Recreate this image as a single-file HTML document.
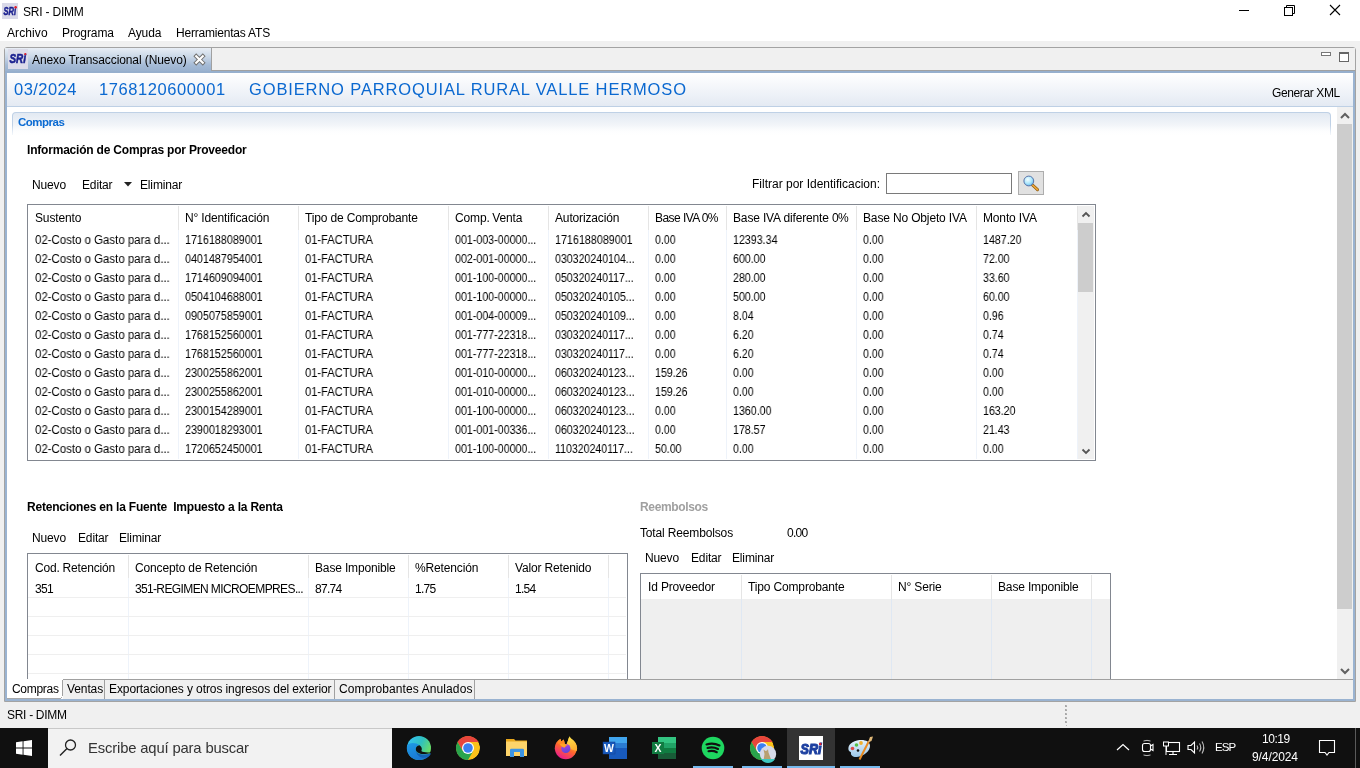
<!DOCTYPE html>
<html><head><meta charset="utf-8"><style>
html,body{margin:0;padding:0;}
body{width:1360px;height:768px;overflow:hidden;position:relative;background:#f0f0f0;font-family:"Liberation Sans",sans-serif;color:#000;}
.t{position:absolute;white-space:pre;will-change:transform;}
.r{position:absolute;box-sizing:border-box;}
svg{position:absolute;overflow:visible;will-change:transform;}
</style></head><body>
<div class="r" style="left:0px;top:0px;width:1360px;height:41px;background:#fff"></div>
<svg style="left:2px;top:3px" width="16" height="16" viewBox="0 0 16 16"><rect x="0" y="0" width="16" height="16" fill="#d9d9e8"/><text x="1.5" y="11.6" font-family="Liberation Sans" font-weight="700" font-style="italic" font-size="10.5" fill="#1c2290" stroke="#1c2290" stroke-width="0.5" textLength="12.5" lengthAdjust="spacingAndGlyphs">SRi</text><circle cx="13.6" cy="4.2" r="1.2" fill="#e8202a"/></svg>
<div class="t" style="left:23px;top:5.84px;font-size:12px;line-height:12px;letter-spacing:-0.2px;">SRI - DIMM</div>
<div class="t" style="left:7px;top:26.84px;font-size:12px;line-height:12px;letter-spacing:0.1px;">Archivo</div>
<div class="t" style="left:62px;top:26.84px;font-size:12px;line-height:12px;letter-spacing:-0.1px;">Programa</div>
<div class="t" style="left:128px;top:26.84px;font-size:12px;line-height:12px;letter-spacing:-0.1px;">Ayuda</div>
<div class="t" style="left:176px;top:26.84px;font-size:12px;line-height:12px;letter-spacing:-0.2px;">Herramientas ATS</div>
<svg style="left:1230px;top:0px" width="130" height="22" viewBox="0 0 130 22"><line x1="9" y1="10.5" x2="19" y2="10.5" stroke="#000" stroke-width="1"/><rect x="54.5" y="7.5" width="8" height="8" fill="none" stroke="#000"/><path d="M56.5 7.5 V5.5 H64.5 V13.5 H62.5" fill="none" stroke="#000"/><path d="M100 5 L110 15 M110 5 L100 15" stroke="#000" stroke-width="1.1"/></svg>
<div class="r" style="left:4px;top:47px;width:1352px;height:655px;border:1px solid #a3a3a3;border-radius:3px 3px 0 0;background:#f0f0f0"></div>
<div class="r" style="left:5px;top:48px;width:206px;height:25px;background:linear-gradient(#e8eef5 0px,#c9d7e7 9px,#a5bbd6 17px,#96afcd 25px)"></div>
<div class="r" style="left:211px;top:48px;width:1144px;height:23px;border-left:1px solid #a0a0a0;border-bottom:1px solid #a0a0a0;background:#f0f0f0"></div>
<div class="r" style="left:5px;top:71px;width:1350px;height:2px;background:#96afcd"></div>
<div class="r" style="left:5px;top:73px;width:2px;height:628px;background:#9ab3d1"></div>
<div class="r" style="left:1353px;top:73px;width:2px;height:628px;background:#9ab3d1"></div>
<div class="r" style="left:5px;top:699px;width:1350px;height:2px;background:#9ab3d1"></div>
<div class="r" style="left:7px;top:73px;width:1346px;height:626px;background:#fff"></div>
<svg style="left:8px;top:49px" width="20" height="20" viewBox="0 0 20 20"><rect x="0" y="0" width="20" height="20" fill="#dcdce9"/><text x="1.5" y="14.299999999999997" font-family="Liberation Sans" font-weight="700" font-style="italic" font-size="13" fill="#1c2290" stroke="#1c2290" stroke-width="0.6" textLength="16.5" lengthAdjust="spacingAndGlyphs">SRi</text><circle cx="17.3" cy="5" r="1.1" fill="#e8202a"/></svg>
<div class="t" style="left:32px;top:53.84px;font-size:12px;line-height:12px;letter-spacing:-0.1px;">Anexo Transaccional (Nuevo)</div>
<svg style="left:193px;top:53px" width="12" height="12" viewBox="0 0 12 12"><path d="M3.2 3.2 L9.8 9.8 M9.8 3.2 L3.2 9.8" stroke="#707070" stroke-width="4" stroke-linecap="square"/><path d="M3.2 3.2 L9.8 9.8 M9.8 3.2 L3.2 9.8" stroke="#fff" stroke-width="2.1" stroke-linecap="square"/></svg>
<div class="r" style="left:1321px;top:52px;width:10px;height:4px;border:1px solid #777;background:#fff"></div>
<div class="r" style="left:1339px;top:52px;width:10px;height:10px;border:1px solid #666;border-top:2px solid #666;background:#fff"></div>
<div class="r" style="left:7px;top:73px;width:1346px;height:33px;background:linear-gradient(#ffffff,#e4eaf3)"></div>
<div class="r" style="left:7px;top:106px;width:1346px;height:1px;background:#bed0e5"></div>
<div class="t" style="left:14px;top:81.03px;font-size:16.5px;line-height:16.5px;letter-spacing:0.45px;color:#0a68d0;"><span style="letter-spacing:0.45px">03</span>/<span style="letter-spacing:0.45px">2024</span></div>
<div class="t" style="left:99px;top:81.03px;font-size:16.5px;line-height:16.5px;letter-spacing:0.58px;color:#0a68d0;"><span style="letter-spacing:0.58px">1768120600001</span></div>
<div class="t" style="left:249px;top:81.03px;font-size:16.5px;line-height:16.5px;letter-spacing:0.86px;color:#0a68d0;">GOBIERNO PARROQUIAL RURAL VALLE HERMOSO</div>
<div class="t" style="left:1272px;top:86.84px;font-size:12px;line-height:12px;letter-spacing:-0.38px;">Generar XML</div>
<div class="r" style="left:12px;top:112px;width:1319px;height:23px;border:1px solid #bfd1e6;border-bottom:none;border-radius:4px 4px 0 0;background:linear-gradient(#e2e9f2,#ffffff)"></div>
<div class="r" style="left:12px;top:125px;width:1319px;height:12px;background:linear-gradient(rgba(255,255,255,0),#fff)"></div>
<div class="t" style="left:18px;top:117.27px;font-size:11.5px;line-height:11.5px;letter-spacing:-0.5px;font-weight:700;color:#0a6ad2;">Compras</div>
<div class="r" style="left:1337px;top:107px;width:16px;height:572px;background:#f0f0f0"></div>
<div class="r" style="left:1337px;top:124px;width:15px;height:485px;background:#cdcdcd"></div>
<svg style="left:1337px;top:107px" width="16" height="16" viewBox="0 0 16 16"><path d="M4 11 L8 7 L12 11" fill="none" stroke="#606060" stroke-width="2"/></svg>
<svg style="left:1337px;top:663px" width="16" height="16" viewBox="0 0 16 16"><path d="M4 6 L8 10 L12 6" fill="none" stroke="#606060" stroke-width="2"/></svg>
<div class="t" style="left:27px;top:143.84px;font-size:12px;line-height:12px;letter-spacing:-0.2px;font-weight:700;">Información de Compras por Proveedor</div>
<div class="t" style="left:32px;top:178.84px;font-size:12px;line-height:12px;letter-spacing:-0.15px;">Nuevo</div>
<div class="t" style="left:82px;top:178.84px;font-size:12px;line-height:12px;letter-spacing:-0.15px;">Editar</div>
<svg style="left:123px;top:181px" width="10" height="7" viewBox="0 0 10 7"><path d="M1 1 L9 1 L5 5.5 Z" fill="#222"/></svg>
<div class="t" style="left:140px;top:178.84px;font-size:12px;line-height:12px;letter-spacing:-0.15px;">Eliminar</div>
<div class="t" style="left:752px;top:177.84px;font-size:12px;line-height:12px;letter-spacing:0px;">Filtrar por Identificacion:</div>
<div class="r" style="left:886px;top:173px;width:126px;height:21px;border:1px solid #7a7a7a;background:#fff"></div>
<div class="r" style="left:1018px;top:171px;width:26px;height:24px;border:1px solid #adadad;background:#e1e1e1"></div>
<svg style="left:1018px;top:171px" width="26" height="24" viewBox="0 0 26 24"><defs><radialGradient id="lg" cx="0.4" cy="0.35" r="0.7"><stop offset="0" stop-color="#f4feff"/><stop offset="0.55" stop-color="#b0e8fc"/><stop offset="1" stop-color="#60b8ec"/></radialGradient></defs><line x1="14.5" y1="14" x2="19.5" y2="18.7" stroke="#8a5a10" stroke-width="3" stroke-linecap="round"/><line x1="14.5" y1="14" x2="19.5" y2="18.7" stroke="#f0a838" stroke-width="1.6" stroke-linecap="round"/><circle cx="10.8" cy="10" r="4.9" fill="url(#lg)" stroke="#5068a0" stroke-width="0.9"/></svg>
<div class="r" style="left:27px;top:204px;width:1069px;height:257px;border:1px solid #828790;background:#fff"></div>
<div class="r" style="left:178px;top:206px;width:1px;height:24px;background:#e5e5e5"></div>
<div class="r" style="left:178px;top:230px;width:1px;height:229px;background:#eef3fa"></div>
<div class="r" style="left:298px;top:206px;width:1px;height:24px;background:#e5e5e5"></div>
<div class="r" style="left:298px;top:230px;width:1px;height:229px;background:#eef3fa"></div>
<div class="r" style="left:448px;top:206px;width:1px;height:24px;background:#e5e5e5"></div>
<div class="r" style="left:448px;top:230px;width:1px;height:229px;background:#eef3fa"></div>
<div class="r" style="left:548px;top:206px;width:1px;height:24px;background:#e5e5e5"></div>
<div class="r" style="left:548px;top:230px;width:1px;height:229px;background:#eef3fa"></div>
<div class="r" style="left:648px;top:206px;width:1px;height:24px;background:#e5e5e5"></div>
<div class="r" style="left:648px;top:230px;width:1px;height:229px;background:#eef3fa"></div>
<div class="r" style="left:726px;top:206px;width:1px;height:24px;background:#e5e5e5"></div>
<div class="r" style="left:726px;top:230px;width:1px;height:229px;background:#eef3fa"></div>
<div class="r" style="left:856px;top:206px;width:1px;height:24px;background:#e5e5e5"></div>
<div class="r" style="left:856px;top:230px;width:1px;height:229px;background:#eef3fa"></div>
<div class="r" style="left:976px;top:206px;width:1px;height:24px;background:#e5e5e5"></div>
<div class="r" style="left:976px;top:230px;width:1px;height:229px;background:#eef3fa"></div>
<div class="r" style="left:1077px;top:206px;width:1px;height:24px;background:#e5e5e5"></div>
<div class="r" style="left:1077px;top:230px;width:1px;height:229px;background:#eef3fa"></div>
<div class="t" style="left:35px;top:211.84px;font-size:12px;line-height:12px;letter-spacing:-0.15px;">Sustento</div>
<div class="t" style="left:185px;top:211.84px;font-size:12px;line-height:12px;letter-spacing:-0.15px;">N° Identificación</div>
<div class="t" style="left:305px;top:211.84px;font-size:12px;line-height:12px;letter-spacing:-0.15px;">Tipo de Comprobante</div>
<div class="t" style="left:455px;top:211.84px;font-size:12px;line-height:12px;letter-spacing:-0.15px;">Comp<span style="letter-spacing:-0.7px">.</span> Venta</div>
<div class="t" style="left:555px;top:211.84px;font-size:12px;line-height:12px;letter-spacing:-0.15px;">Autorización</div>
<div class="t" style="left:655px;top:211.84px;font-size:12px;line-height:12px;letter-spacing:-0.55px;">Base IVA <span style="letter-spacing:-0.7px">0</span>%</div>
<div class="t" style="left:733px;top:211.84px;font-size:12px;line-height:12px;letter-spacing:-0.15px;">Base IVA diferente <span style="letter-spacing:-0.7px">0</span>%</div>
<div class="t" style="left:863px;top:211.84px;font-size:12px;line-height:12px;letter-spacing:-0.15px;">Base No Objeto IVA</div>
<div class="t" style="left:983px;top:211.84px;font-size:12px;line-height:12px;letter-spacing:-0.15px;">Monto IVA</div>
<div class="t" style="left:35px;top:233.84px;font-size:12px;line-height:12px;transform:scaleX(0.9530);transform-origin:0 0;">02-Costo o Gasto para d...</div>
<div class="t" style="left:185px;top:233.84px;font-size:12px;line-height:12px;transform:scaleX(0.8951);transform-origin:0 0;">1716188089001</div>
<div class="t" style="left:305px;top:233.84px;font-size:12px;line-height:12px;transform:scaleX(0.9264);transform-origin:0 0;">01-FACTURA</div>
<div class="t" style="left:455px;top:233.84px;font-size:12px;line-height:12px;transform:scaleX(0.8895);transform-origin:0 0;">001-003-00000...</div>
<div class="t" style="left:555px;top:233.84px;font-size:12px;line-height:12px;transform:scaleX(0.8951);transform-origin:0 0;">1716188089001</div>
<div class="t" style="left:655px;top:233.84px;font-size:12px;line-height:12px;transform:scaleX(0.8801);transform-origin:0 0;">0.00</div>
<div class="t" style="left:733px;top:233.84px;font-size:12px;line-height:12px;transform:scaleX(0.8881);transform-origin:0 0;">12393.34</div>
<div class="t" style="left:863px;top:233.84px;font-size:12px;line-height:12px;transform:scaleX(0.8801);transform-origin:0 0;">0.00</div>
<div class="t" style="left:983px;top:233.84px;font-size:12px;line-height:12px;transform:scaleX(0.8870);transform-origin:0 0;">1487.20</div>
<div class="t" style="left:35px;top:252.84px;font-size:12px;line-height:12px;transform:scaleX(0.9530);transform-origin:0 0;">02-Costo o Gasto para d...</div>
<div class="t" style="left:185px;top:252.84px;font-size:12px;line-height:12px;transform:scaleX(0.8951);transform-origin:0 0;">0401487954001</div>
<div class="t" style="left:305px;top:252.84px;font-size:12px;line-height:12px;transform:scaleX(0.9264);transform-origin:0 0;">01-FACTURA</div>
<div class="t" style="left:455px;top:252.84px;font-size:12px;line-height:12px;transform:scaleX(0.8895);transform-origin:0 0;">002-001-00000...</div>
<div class="t" style="left:555px;top:252.84px;font-size:12px;line-height:12px;transform:scaleX(0.8834);transform-origin:0 0;">030320240104...</div>
<div class="t" style="left:655px;top:252.84px;font-size:12px;line-height:12px;transform:scaleX(0.8801);transform-origin:0 0;">0.00</div>
<div class="t" style="left:733px;top:252.84px;font-size:12px;line-height:12px;transform:scaleX(0.8856);transform-origin:0 0;">600.00</div>
<div class="t" style="left:863px;top:252.84px;font-size:12px;line-height:12px;transform:scaleX(0.8801);transform-origin:0 0;">0.00</div>
<div class="t" style="left:983px;top:252.84px;font-size:12px;line-height:12px;transform:scaleX(0.8834);transform-origin:0 0;">72.00</div>
<div class="t" style="left:35px;top:271.84px;font-size:12px;line-height:12px;transform:scaleX(0.9530);transform-origin:0 0;">02-Costo o Gasto para d...</div>
<div class="t" style="left:185px;top:271.84px;font-size:12px;line-height:12px;transform:scaleX(0.8951);transform-origin:0 0;">1714609094001</div>
<div class="t" style="left:305px;top:271.84px;font-size:12px;line-height:12px;transform:scaleX(0.9264);transform-origin:0 0;">01-FACTURA</div>
<div class="t" style="left:455px;top:271.84px;font-size:12px;line-height:12px;transform:scaleX(0.8895);transform-origin:0 0;">001-100-00000...</div>
<div class="t" style="left:555px;top:271.84px;font-size:12px;line-height:12px;transform:scaleX(0.8823);transform-origin:0 0;">050320240117...</div>
<div class="t" style="left:655px;top:271.84px;font-size:12px;line-height:12px;transform:scaleX(0.8801);transform-origin:0 0;">0.00</div>
<div class="t" style="left:733px;top:271.84px;font-size:12px;line-height:12px;transform:scaleX(0.8856);transform-origin:0 0;">280.00</div>
<div class="t" style="left:863px;top:271.84px;font-size:12px;line-height:12px;transform:scaleX(0.8801);transform-origin:0 0;">0.00</div>
<div class="t" style="left:983px;top:271.84px;font-size:12px;line-height:12px;transform:scaleX(0.8834);transform-origin:0 0;">33.60</div>
<div class="t" style="left:35px;top:290.84px;font-size:12px;line-height:12px;transform:scaleX(0.9530);transform-origin:0 0;">02-Costo o Gasto para d...</div>
<div class="t" style="left:185px;top:290.84px;font-size:12px;line-height:12px;transform:scaleX(0.8951);transform-origin:0 0;">0504104688001</div>
<div class="t" style="left:305px;top:290.84px;font-size:12px;line-height:12px;transform:scaleX(0.9264);transform-origin:0 0;">01-FACTURA</div>
<div class="t" style="left:455px;top:290.84px;font-size:12px;line-height:12px;transform:scaleX(0.8895);transform-origin:0 0;">001-100-00000...</div>
<div class="t" style="left:555px;top:290.84px;font-size:12px;line-height:12px;transform:scaleX(0.8834);transform-origin:0 0;">050320240105...</div>
<div class="t" style="left:655px;top:290.84px;font-size:12px;line-height:12px;transform:scaleX(0.8801);transform-origin:0 0;">0.00</div>
<div class="t" style="left:733px;top:290.84px;font-size:12px;line-height:12px;transform:scaleX(0.8856);transform-origin:0 0;">500.00</div>
<div class="t" style="left:863px;top:290.84px;font-size:12px;line-height:12px;transform:scaleX(0.8801);transform-origin:0 0;">0.00</div>
<div class="t" style="left:983px;top:290.84px;font-size:12px;line-height:12px;transform:scaleX(0.8834);transform-origin:0 0;">60.00</div>
<div class="t" style="left:35px;top:309.84px;font-size:12px;line-height:12px;transform:scaleX(0.9530);transform-origin:0 0;">02-Costo o Gasto para d...</div>
<div class="t" style="left:185px;top:309.84px;font-size:12px;line-height:12px;transform:scaleX(0.8951);transform-origin:0 0;">0905075859001</div>
<div class="t" style="left:305px;top:309.84px;font-size:12px;line-height:12px;transform:scaleX(0.9264);transform-origin:0 0;">01-FACTURA</div>
<div class="t" style="left:455px;top:309.84px;font-size:12px;line-height:12px;transform:scaleX(0.8895);transform-origin:0 0;">001-004-00009...</div>
<div class="t" style="left:555px;top:309.84px;font-size:12px;line-height:12px;transform:scaleX(0.8834);transform-origin:0 0;">050320240109...</div>
<div class="t" style="left:655px;top:309.84px;font-size:12px;line-height:12px;transform:scaleX(0.8801);transform-origin:0 0;">0.00</div>
<div class="t" style="left:733px;top:309.84px;font-size:12px;line-height:12px;transform:scaleX(0.8801);transform-origin:0 0;">8.04</div>
<div class="t" style="left:863px;top:309.84px;font-size:12px;line-height:12px;transform:scaleX(0.8801);transform-origin:0 0;">0.00</div>
<div class="t" style="left:983px;top:309.84px;font-size:12px;line-height:12px;transform:scaleX(0.8801);transform-origin:0 0;">0.96</div>
<div class="t" style="left:35px;top:328.84px;font-size:12px;line-height:12px;transform:scaleX(0.9530);transform-origin:0 0;">02-Costo o Gasto para d...</div>
<div class="t" style="left:185px;top:328.84px;font-size:12px;line-height:12px;transform:scaleX(0.8951);transform-origin:0 0;">1768152560001</div>
<div class="t" style="left:305px;top:328.84px;font-size:12px;line-height:12px;transform:scaleX(0.9264);transform-origin:0 0;">01-FACTURA</div>
<div class="t" style="left:455px;top:328.84px;font-size:12px;line-height:12px;transform:scaleX(0.8895);transform-origin:0 0;">001-777-22318...</div>
<div class="t" style="left:555px;top:328.84px;font-size:12px;line-height:12px;transform:scaleX(0.8823);transform-origin:0 0;">030320240117...</div>
<div class="t" style="left:655px;top:328.84px;font-size:12px;line-height:12px;transform:scaleX(0.8801);transform-origin:0 0;">0.00</div>
<div class="t" style="left:733px;top:328.84px;font-size:12px;line-height:12px;transform:scaleX(0.8801);transform-origin:0 0;">6.20</div>
<div class="t" style="left:863px;top:328.84px;font-size:12px;line-height:12px;transform:scaleX(0.8801);transform-origin:0 0;">0.00</div>
<div class="t" style="left:983px;top:328.84px;font-size:12px;line-height:12px;transform:scaleX(0.8801);transform-origin:0 0;">0.74</div>
<div class="t" style="left:35px;top:347.84px;font-size:12px;line-height:12px;transform:scaleX(0.9530);transform-origin:0 0;">02-Costo o Gasto para d...</div>
<div class="t" style="left:185px;top:347.84px;font-size:12px;line-height:12px;transform:scaleX(0.8951);transform-origin:0 0;">1768152560001</div>
<div class="t" style="left:305px;top:347.84px;font-size:12px;line-height:12px;transform:scaleX(0.9264);transform-origin:0 0;">01-FACTURA</div>
<div class="t" style="left:455px;top:347.84px;font-size:12px;line-height:12px;transform:scaleX(0.8895);transform-origin:0 0;">001-777-22318...</div>
<div class="t" style="left:555px;top:347.84px;font-size:12px;line-height:12px;transform:scaleX(0.8823);transform-origin:0 0;">030320240117...</div>
<div class="t" style="left:655px;top:347.84px;font-size:12px;line-height:12px;transform:scaleX(0.8801);transform-origin:0 0;">0.00</div>
<div class="t" style="left:733px;top:347.84px;font-size:12px;line-height:12px;transform:scaleX(0.8801);transform-origin:0 0;">6.20</div>
<div class="t" style="left:863px;top:347.84px;font-size:12px;line-height:12px;transform:scaleX(0.8801);transform-origin:0 0;">0.00</div>
<div class="t" style="left:983px;top:347.84px;font-size:12px;line-height:12px;transform:scaleX(0.8801);transform-origin:0 0;">0.74</div>
<div class="t" style="left:35px;top:366.84px;font-size:12px;line-height:12px;transform:scaleX(0.9530);transform-origin:0 0;">02-Costo o Gasto para d...</div>
<div class="t" style="left:185px;top:366.84px;font-size:12px;line-height:12px;transform:scaleX(0.8951);transform-origin:0 0;">2300255862001</div>
<div class="t" style="left:305px;top:366.84px;font-size:12px;line-height:12px;transform:scaleX(0.9264);transform-origin:0 0;">01-FACTURA</div>
<div class="t" style="left:455px;top:366.84px;font-size:12px;line-height:12px;transform:scaleX(0.8895);transform-origin:0 0;">001-010-00000...</div>
<div class="t" style="left:555px;top:366.84px;font-size:12px;line-height:12px;transform:scaleX(0.8834);transform-origin:0 0;">060320240123...</div>
<div class="t" style="left:655px;top:366.84px;font-size:12px;line-height:12px;transform:scaleX(0.8856);transform-origin:0 0;">159.26</div>
<div class="t" style="left:733px;top:366.84px;font-size:12px;line-height:12px;transform:scaleX(0.8801);transform-origin:0 0;">0.00</div>
<div class="t" style="left:863px;top:366.84px;font-size:12px;line-height:12px;transform:scaleX(0.8801);transform-origin:0 0;">0.00</div>
<div class="t" style="left:983px;top:366.84px;font-size:12px;line-height:12px;transform:scaleX(0.8801);transform-origin:0 0;">0.00</div>
<div class="t" style="left:35px;top:385.84px;font-size:12px;line-height:12px;transform:scaleX(0.9530);transform-origin:0 0;">02-Costo o Gasto para d...</div>
<div class="t" style="left:185px;top:385.84px;font-size:12px;line-height:12px;transform:scaleX(0.8951);transform-origin:0 0;">2300255862001</div>
<div class="t" style="left:305px;top:385.84px;font-size:12px;line-height:12px;transform:scaleX(0.9264);transform-origin:0 0;">01-FACTURA</div>
<div class="t" style="left:455px;top:385.84px;font-size:12px;line-height:12px;transform:scaleX(0.8895);transform-origin:0 0;">001-010-00000...</div>
<div class="t" style="left:555px;top:385.84px;font-size:12px;line-height:12px;transform:scaleX(0.8834);transform-origin:0 0;">060320240123...</div>
<div class="t" style="left:655px;top:385.84px;font-size:12px;line-height:12px;transform:scaleX(0.8856);transform-origin:0 0;">159.26</div>
<div class="t" style="left:733px;top:385.84px;font-size:12px;line-height:12px;transform:scaleX(0.8801);transform-origin:0 0;">0.00</div>
<div class="t" style="left:863px;top:385.84px;font-size:12px;line-height:12px;transform:scaleX(0.8801);transform-origin:0 0;">0.00</div>
<div class="t" style="left:983px;top:385.84px;font-size:12px;line-height:12px;transform:scaleX(0.8801);transform-origin:0 0;">0.00</div>
<div class="t" style="left:35px;top:404.84px;font-size:12px;line-height:12px;transform:scaleX(0.9530);transform-origin:0 0;">02-Costo o Gasto para d...</div>
<div class="t" style="left:185px;top:404.84px;font-size:12px;line-height:12px;transform:scaleX(0.8951);transform-origin:0 0;">2300154289001</div>
<div class="t" style="left:305px;top:404.84px;font-size:12px;line-height:12px;transform:scaleX(0.9264);transform-origin:0 0;">01-FACTURA</div>
<div class="t" style="left:455px;top:404.84px;font-size:12px;line-height:12px;transform:scaleX(0.8895);transform-origin:0 0;">001-100-00000...</div>
<div class="t" style="left:555px;top:404.84px;font-size:12px;line-height:12px;transform:scaleX(0.8834);transform-origin:0 0;">060320240123...</div>
<div class="t" style="left:655px;top:404.84px;font-size:12px;line-height:12px;transform:scaleX(0.8801);transform-origin:0 0;">0.00</div>
<div class="t" style="left:733px;top:404.84px;font-size:12px;line-height:12px;transform:scaleX(0.8870);transform-origin:0 0;">1360.00</div>
<div class="t" style="left:863px;top:404.84px;font-size:12px;line-height:12px;transform:scaleX(0.8801);transform-origin:0 0;">0.00</div>
<div class="t" style="left:983px;top:404.84px;font-size:12px;line-height:12px;transform:scaleX(0.8856);transform-origin:0 0;">163.20</div>
<div class="t" style="left:35px;top:423.84px;font-size:12px;line-height:12px;transform:scaleX(0.9530);transform-origin:0 0;">02-Costo o Gasto para d...</div>
<div class="t" style="left:185px;top:423.84px;font-size:12px;line-height:12px;transform:scaleX(0.8951);transform-origin:0 0;">2390018293001</div>
<div class="t" style="left:305px;top:423.84px;font-size:12px;line-height:12px;transform:scaleX(0.9264);transform-origin:0 0;">01-FACTURA</div>
<div class="t" style="left:455px;top:423.84px;font-size:12px;line-height:12px;transform:scaleX(0.8895);transform-origin:0 0;">001-001-00336...</div>
<div class="t" style="left:555px;top:423.84px;font-size:12px;line-height:12px;transform:scaleX(0.8834);transform-origin:0 0;">060320240123...</div>
<div class="t" style="left:655px;top:423.84px;font-size:12px;line-height:12px;transform:scaleX(0.8801);transform-origin:0 0;">0.00</div>
<div class="t" style="left:733px;top:423.84px;font-size:12px;line-height:12px;transform:scaleX(0.8856);transform-origin:0 0;">178.57</div>
<div class="t" style="left:863px;top:423.84px;font-size:12px;line-height:12px;transform:scaleX(0.8801);transform-origin:0 0;">0.00</div>
<div class="t" style="left:983px;top:423.84px;font-size:12px;line-height:12px;transform:scaleX(0.8834);transform-origin:0 0;">21.43</div>
<div class="t" style="left:35px;top:442.84px;font-size:12px;line-height:12px;transform:scaleX(0.9530);transform-origin:0 0;">02-Costo o Gasto para d...</div>
<div class="t" style="left:185px;top:442.84px;font-size:12px;line-height:12px;transform:scaleX(0.8951);transform-origin:0 0;">1720652450001</div>
<div class="t" style="left:305px;top:442.84px;font-size:12px;line-height:12px;transform:scaleX(0.9264);transform-origin:0 0;">01-FACTURA</div>
<div class="t" style="left:455px;top:442.84px;font-size:12px;line-height:12px;transform:scaleX(0.8895);transform-origin:0 0;">001-100-00000...</div>
<div class="t" style="left:555px;top:442.84px;font-size:12px;line-height:12px;transform:scaleX(0.8811);transform-origin:0 0;">110320240117...</div>
<div class="t" style="left:655px;top:442.84px;font-size:12px;line-height:12px;transform:scaleX(0.8834);transform-origin:0 0;">50.00</div>
<div class="t" style="left:733px;top:442.84px;font-size:12px;line-height:12px;transform:scaleX(0.8801);transform-origin:0 0;">0.00</div>
<div class="t" style="left:863px;top:442.84px;font-size:12px;line-height:12px;transform:scaleX(0.8801);transform-origin:0 0;">0.00</div>
<div class="t" style="left:983px;top:442.84px;font-size:12px;line-height:12px;transform:scaleX(0.8801);transform-origin:0 0;">0.00</div>
<div class="r" style="left:1078px;top:206px;width:16px;height:253px;background:#f0f0f0"></div>
<div class="r" style="left:1078px;top:223px;width:15px;height:69px;background:#cdcdcd"></div>
<svg style="left:1078px;top:206px" width="16" height="16" viewBox="0 0 16 16"><path d="M4.5 10.5 L8 7 L11.5 10.5" fill="none" stroke="#555" stroke-width="1.8"/></svg>
<svg style="left:1078px;top:443px" width="16" height="16" viewBox="0 0 16 16"><path d="M4.5 6.5 L8 10 L11.5 6.5" fill="none" stroke="#555" stroke-width="1.8"/></svg>
<div class="t" style="left:27px;top:500.84px;font-size:12px;line-height:12px;letter-spacing:-0.2px;font-weight:700;">Retenciones en la Fuente  Impuesto a la Renta</div>
<div class="t" style="left:32px;top:531.84px;font-size:12px;line-height:12px;letter-spacing:-0.15px;">Nuevo</div>
<div class="t" style="left:78px;top:531.84px;font-size:12px;line-height:12px;letter-spacing:-0.15px;">Editar</div>
<div class="t" style="left:119px;top:531.84px;font-size:12px;line-height:12px;letter-spacing:-0.15px;">Eliminar</div>
<div class="r" style="left:27px;top:553px;width:601px;height:130px;border:1px solid #828790;border-bottom:none;background:#fff"></div>
<div class="r" style="left:128px;top:555px;width:1px;height:23px;background:#e5e5e5"></div>
<div class="r" style="left:128px;top:578px;width:1px;height:101px;background:#eef3fa"></div>
<div class="r" style="left:308px;top:555px;width:1px;height:23px;background:#e5e5e5"></div>
<div class="r" style="left:308px;top:578px;width:1px;height:101px;background:#eef3fa"></div>
<div class="r" style="left:408px;top:555px;width:1px;height:23px;background:#e5e5e5"></div>
<div class="r" style="left:408px;top:578px;width:1px;height:101px;background:#eef3fa"></div>
<div class="r" style="left:508px;top:555px;width:1px;height:23px;background:#e5e5e5"></div>
<div class="r" style="left:508px;top:578px;width:1px;height:101px;background:#eef3fa"></div>
<div class="r" style="left:608px;top:555px;width:1px;height:23px;background:#e5e5e5"></div>
<div class="r" style="left:608px;top:578px;width:1px;height:101px;background:#eef3fa"></div>
<div class="r" style="left:28px;top:597px;width:598px;height:1px;background:#efefef"></div>
<div class="r" style="left:28px;top:616px;width:598px;height:1px;background:#efefef"></div>
<div class="r" style="left:28px;top:635px;width:598px;height:1px;background:#efefef"></div>
<div class="r" style="left:28px;top:654px;width:598px;height:1px;background:#efefef"></div>
<div class="r" style="left:28px;top:673px;width:598px;height:1px;background:#efefef"></div>
<div class="t" style="left:35px;top:561.84px;font-size:12px;line-height:12px;letter-spacing:-0.15px;">Cod<span style="letter-spacing:-0.7px">.</span> Retención</div>
<div class="t" style="left:135px;top:561.84px;font-size:12px;line-height:12px;letter-spacing:-0.15px;">Concepto de Retención</div>
<div class="t" style="left:315px;top:561.84px;font-size:12px;line-height:12px;letter-spacing:-0.15px;">Base Imponible</div>
<div class="t" style="left:415px;top:561.84px;font-size:12px;line-height:12px;letter-spacing:-0.15px;">%Retención</div>
<div class="t" style="left:515px;top:561.84px;font-size:12px;line-height:12px;letter-spacing:-0.15px;">Valor Retenido</div>
<div class="t" style="left:35px;top:582.84px;font-size:12px;line-height:12px;letter-spacing:-0.15px;"><span style="letter-spacing:-0.7px">351</span></div>
<div class="t" style="left:135px;top:582.84px;font-size:12px;line-height:12px;letter-spacing:-0.6px;"><span style="letter-spacing:-0.7px">351</span>-REGIMEN MICROEMPRES<span style="letter-spacing:-0.7px">...</span></div>
<div class="t" style="left:315px;top:582.84px;font-size:12px;line-height:12px;letter-spacing:-0.15px;"><span style="letter-spacing:-0.7px">87.74</span></div>
<div class="t" style="left:415px;top:582.84px;font-size:12px;line-height:12px;letter-spacing:-0.15px;"><span style="letter-spacing:-0.7px">1.75</span></div>
<div class="t" style="left:515px;top:582.84px;font-size:12px;line-height:12px;letter-spacing:-0.15px;"><span style="letter-spacing:-0.7px">1.54</span></div>
<div class="t" style="left:640px;top:500.84px;font-size:12px;line-height:12px;letter-spacing:-0.35px;font-weight:700;color:#a0a0a0;">Reembolsos</div>
<div class="t" style="left:640px;top:526.84px;font-size:12px;line-height:12px;letter-spacing:-0.15px;">Total Reembolsos</div>
<div class="t" style="left:787px;top:526.84px;font-size:12px;line-height:12px;letter-spacing:-0.15px;"><span style="letter-spacing:-0.7px">0.00</span></div>
<div class="t" style="left:645px;top:551.84px;font-size:12px;line-height:12px;letter-spacing:-0.15px;">Nuevo</div>
<div class="t" style="left:691px;top:551.84px;font-size:12px;line-height:12px;letter-spacing:-0.15px;">Editar</div>
<div class="t" style="left:732px;top:551.84px;font-size:12px;line-height:12px;letter-spacing:-0.15px;">Eliminar</div>
<div class="r" style="left:640px;top:573px;width:471px;height:110px;border:1px solid #828790;border-bottom:none;background:#efefef"></div>
<div class="r" style="left:641px;top:574px;width:469px;height:25px;background:#fff"></div>
<div class="r" style="left:741px;top:575px;width:1px;height:24px;background:#e5e5e5"></div>
<div class="r" style="left:741px;top:599px;width:1px;height:80px;background:#dfe8f3"></div>
<div class="r" style="left:891px;top:575px;width:1px;height:24px;background:#e5e5e5"></div>
<div class="r" style="left:891px;top:599px;width:1px;height:80px;background:#dfe8f3"></div>
<div class="r" style="left:991px;top:575px;width:1px;height:24px;background:#e5e5e5"></div>
<div class="r" style="left:991px;top:599px;width:1px;height:80px;background:#dfe8f3"></div>
<div class="r" style="left:1091px;top:575px;width:1px;height:24px;background:#e5e5e5"></div>
<div class="r" style="left:1091px;top:599px;width:1px;height:80px;background:#dfe8f3"></div>
<div class="t" style="left:648px;top:580.84px;font-size:12px;line-height:12px;letter-spacing:-0.15px;">Id Proveedor</div>
<div class="t" style="left:748px;top:580.84px;font-size:12px;line-height:12px;letter-spacing:-0.15px;">Tipo Comprobante</div>
<div class="t" style="left:898px;top:580.84px;font-size:12px;line-height:12px;letter-spacing:-0.15px;">N° Serie</div>
<div class="t" style="left:998px;top:580.84px;font-size:12px;line-height:12px;letter-spacing:-0.15px;">Base Imponible</div>
<div class="r" style="left:7px;top:679px;width:1346px;height:20px;background:#f0f0f0;border-top:1px solid #a0a0a0"></div>
<div class="r" style="left:7px;top:679px;width:56px;height:20px;background:#fff"></div>
<div class="r" style="left:62px;top:680px;width:1px;height:16px;background:#a0a0a0"></div>
<div class="r" style="left:7px;top:698px;width:54px;height:1px;background:#a8a8a8"></div>
<div class="r" style="left:61px;top:697px;width:1px;height:1px;background:#a8a8a8"></div>
<div class="t" style="left:12px;top:682.84px;font-size:12px;line-height:12px;letter-spacing:-0.3px;">Compras</div>
<div class="r" style="left:62px;top:680px;width:43px;height:19px;border-right:1px solid #a0a0a0"></div>
<div class="t" style="left:67px;top:682.84px;font-size:12px;line-height:12px;letter-spacing:-0.1px;">Ventas</div>
<div class="r" style="left:104px;top:680px;width:231px;height:19px;border-right:1px solid #a0a0a0"></div>
<div class="t" style="left:109px;top:682.84px;font-size:12px;line-height:12px;letter-spacing:-0.1px;">Exportaciones y otros ingresos del exterior</div>
<div class="r" style="left:334px;top:680px;width:141px;height:19px;border-right:1px solid #a0a0a0"></div>
<div class="t" style="left:339px;top:682.84px;font-size:12px;line-height:12px;letter-spacing:0.1px;">Comprobantes Anulados</div>
<div class="t" style="left:7px;top:708.84px;font-size:12px;line-height:12px;letter-spacing:-0.3px;">SRI - DIMM</div>
<div class="r" style="left:1065px;top:705px;width:2px;height:2px;background:#a8a8a8;border-radius:0 1px 0 0"></div>
<div class="r" style="left:1065px;top:709px;width:2px;height:2px;background:#a8a8a8;border-radius:0 1px 0 0"></div>
<div class="r" style="left:1065px;top:713px;width:2px;height:2px;background:#a8a8a8;border-radius:0 1px 0 0"></div>
<div class="r" style="left:1065px;top:717px;width:2px;height:2px;background:#a8a8a8;border-radius:0 1px 0 0"></div>
<div class="r" style="left:1065px;top:721px;width:2px;height:2px;background:#a8a8a8;border-radius:0 1px 0 0"></div>
<div class="r" style="left:1066px;top:725px;width:1px;height:1px;background:#b8b8b8"></div>
<div class="r" style="left:0px;top:728px;width:1360px;height:40px;background:#101010"></div>
<svg style="left:16px;top:740px" width="16" height="16" viewBox="0 0 16 16"><path d="M0 2.2 L6.6 1.3 V7.5 H0 Z M7.5 1.15 L16 0 V7.5 H7.5 Z M0 8.5 H6.6 V14.7 L0 13.8 Z M7.5 8.5 H16 V16 L7.5 14.85 Z" fill="#fff"/></svg>
<div class="r" style="left:48px;top:728px;width:344px;height:40px;background:#f2f2f2;border-top:1px solid #c8c8c8"></div>
<svg style="left:58px;top:738px" width="20" height="20" viewBox="0 0 20 20"><circle cx="12.5" cy="7" r="5" fill="none" stroke="#222" stroke-width="1.3"/><line x1="9" y1="10.5" x2="2" y2="17.5" stroke="#222" stroke-width="1.4"/></svg>
<div class="t" style="left:88px;top:741.47px;font-size:14.8px;line-height:14.8px;letter-spacing:-0.15px;color:#333;">Escribe aquí para buscar</div>
<svg style="left:406px;top:735px" width="26" height="26" viewBox="0 0 26 26"><defs><linearGradient id="eg1" x1="0" y1="0.2" x2="1" y2="0.7"><stop offset="0" stop-color="#36c2f4"/><stop offset="0.5" stop-color="#2fc0c0"/><stop offset="1" stop-color="#74e456"/></linearGradient><linearGradient id="eg2" x1="0" y1="0" x2="0.6" y2="1"><stop offset="0" stop-color="#1e9be6"/><stop offset="1" stop-color="#1a74d0"/></linearGradient></defs><circle cx="13" cy="13" r="12" fill="url(#eg1)"/><path d="M1.2 10 C4 7.2 10 7.2 13.5 10.3 C10.5 10.3 9.3 13 9.7 15 C10.3 18.5 14 19.5 17 19.5 C20 19.5 22.5 19 24.8 18.5 C23 22.5 18.5 25 13 25 A12 12 0 0 1 1.2 10 Z" fill="url(#eg2)"/><path d="M9.7 15 C10.3 18.5 14 19.5 17 19.5 C20 19.5 22.5 19 24.8 18.5 C23.5 21 21 22.8 18 22.8 C13.5 22.8 10 19.5 9.7 15 Z" fill="#1562b4"/><path d="M13.5 10.3 C10.8 10.3 9.6 12.5 9.8 14.8 C10.2 17.5 13.5 19 17 19 C20 19 22.5 18.4 24.8 18 L24.9 17.2 C21 17.6 17 17.4 15.3 16 C16.2 14.8 16.2 12 13.5 10.3 Z" fill="#101010"/></svg>
<svg style="left:456px;top:736px" width="32" height="32" viewBox="0 0 32 32"><defs><clipPath id="cc468"><circle cx="12" cy="12" r="12"/></clipPath></defs><g clip-path="url(#cc468)"><circle cx="12" cy="12" r="12" fill="#fbc11a"/><path d="M12.00 6.00 L52.00 6.00 L52 -28 L-28 -28 L-13.20 -19.64 L6.80 15.00 L12 12 Z" fill="#e8453c"/><path d="M6.80 15.00 L-13.20 -19.64 L-28 52 L-2.80 49.64 L17.20 15.00 L12 12 Z" fill="#2aa44c"/></g><circle cx="12" cy="12" r="6.00" fill="#fff"/><circle cx="12" cy="12" r="4.80" fill="#3b7ff0"/></svg>
<svg style="left:505px;top:738px" width="24" height="20" viewBox="0 0 24 20"><path d="M1 1 H9 L10.5 2.5 H22 V18 H1 Z" fill="#e9a81c"/><rect x="1" y="3.5" width="21" height="14.5" fill="#fdd46a"/><path d="M5 19 V12 Q5 10.8 6.2 10.8 H17.8 Q19 10.8 19 12 V19 H15 V14 H9 V19 Z" fill="#3c94e4"/></svg>
<svg style="left:553px;top:735px" width="26" height="26" viewBox="0 0 26 26"><defs><linearGradient id="ff1" x1="0.85" y1="0.1" x2="0.35" y2="1"><stop offset="0" stop-color="#ffe448"/><stop offset="0.5" stop-color="#ff6a2a"/><stop offset="1" stop-color="#ea1c8c"/></linearGradient><linearGradient id="ff2" x1="0" y1="0" x2="0.3" y2="1"><stop offset="0" stop-color="#ffe850"/><stop offset="1" stop-color="#ffb030"/></linearGradient><linearGradient id="ff3" x1="0.3" y1="0" x2="0.6" y2="1"><stop offset="0" stop-color="#b040e8"/><stop offset="1" stop-color="#5a48d8"/></linearGradient></defs><circle cx="12.8" cy="13.2" r="11" fill="url(#ff1)"/><path d="M0 0 L0 6 L4 6 L7.3 3.8 L8.3 6.5 L10.8 4.5 L11.8 8.8 L13.5 9.6 L15.5 4 L16.5 0 Z" fill="#101010"/><path d="M4.5 8.5 L7.3 3.8 L8.3 6.5 L10.8 4.5 L11.8 8.5 Z" fill="#ff8a24"/><path d="M13.5 9.5 C15 6.5 15.5 3.5 16.5 1.3 C17.5 3 19 5 21 6.2 C23.5 8.5 24.8 12 23.8 16 L14 13 Z" fill="url(#ff2)"/><circle cx="12.8" cy="13.5" r="4.6" fill="url(#ff3)"/><path d="M6.5 9 C9 8 12 8.5 14.8 10 C13.2 10.6 12.2 11.5 11.5 12.8 C9.5 12.2 8 11 6.5 9 Z" fill="#ffa424"/></svg>
<svg style="left:603px;top:737px" width="26" height="22" viewBox="0 0 26 22"><rect x="6" y="0" width="18" height="22" fill="#185abd"/><rect x="6" y="0" width="18" height="6" fill="#41a5ee"/><rect x="6" y="6" width="18" height="5" fill="#2b7cd3"/><rect x="0" y="5" width="12" height="12" fill="#185abd" stroke="#103f91" stroke-width="0.5"/><text x="6" y="14.5" font-family="Liberation Sans" font-weight="700" font-size="10.5" fill="#fff" text-anchor="middle">W</text></svg>
<svg style="left:652px;top:737px" width="26" height="22" viewBox="0 0 26 22"><rect x="6" y="0" width="18" height="22" fill="#107c41"/><rect x="6" y="0" width="18" height="6" fill="#33c481"/><rect x="6" y="6" width="18" height="5" fill="#21a366"/><rect x="6" y="16" width="18" height="6" fill="#185c37"/><rect x="0" y="5" width="12" height="12" fill="#107c41"/><text x="6" y="14.5" font-family="Liberation Sans" font-weight="700" font-size="10.5" fill="#fff" text-anchor="middle">X</text></svg>
<svg style="left:701px;top:736px" width="24" height="24" viewBox="0 0 24 24"><circle cx="12" cy="12" r="11.3" fill="#1ed760"/><path d="M5.5 8.5 C10 7 14.5 7.5 18.5 9.5 M6.5 12 C10 11 14 11.5 17 13 M7.5 15.3 C10.5 14.5 13.5 15 15.8 16.2" fill="none" stroke="#101010" stroke-width="2.1" stroke-linecap="round"/></svg>
<svg style="left:750px;top:736px" width="32" height="32" viewBox="0 0 32 32"><defs><clipPath id="cc762"><circle cx="12" cy="12" r="12"/></clipPath></defs><g clip-path="url(#cc762)"><circle cx="12" cy="12" r="12" fill="#fbc11a"/><path d="M12.00 6.00 L52.00 6.00 L52 -28 L-28 -28 L-13.20 -19.64 L6.80 15.00 L12 12 Z" fill="#e8453c"/><path d="M6.80 15.00 L-13.20 -19.64 L-28 52 L-2.80 49.64 L17.20 15.00 L12 12 Z" fill="#2aa44c"/></g><circle cx="12" cy="12" r="6.00" fill="#fff"/><circle cx="12" cy="12" r="4.80" fill="#3b7ff0"/><circle cx="18" cy="18" r="8.2" fill="#d6dae8"/><path d="M13.5 24.5 L14.5 18 L13.5 13.5 L15.5 15 L17 14.5 L18 13 L18.5 16.5 L20.5 22 L22 24.5 Z" fill="#b8a070"/><path d="M11 23 A8.2 8.2 0 0 0 25 23 Z" fill="#3ec8c0"/></svg>
<div class="r" style="left:787px;top:728px;width:48px;height:40px;background:#333333"></div>
<svg style="left:799px;top:736px" width="24" height="24" viewBox="0 0 24 24"><rect x="0" y="0" width="24" height="24" fill="#fff"/><text x="1.5" y="18" font-family="Liberation Sans" font-weight="700" font-style="italic" font-size="14" fill="#1d40a0" stroke="#1d40a0" stroke-width="1.1" textLength="21" lengthAdjust="spacingAndGlyphs">SRi</text><circle cx="21.299999999999955" cy="8" r="1.2" fill="#e8202a"/></svg>
<svg style="left:846px;top:735px" width="28" height="26" viewBox="0 0 28 26"><defs><linearGradient id="pg" x1="0" y1="0" x2="0" y2="1"><stop offset="0" stop-color="#e4f2fc"/><stop offset="1" stop-color="#9cc8e8"/></linearGradient></defs><path d="M3 16 C1 12 4 7 11 5.5 C18 4 24 6 24 11 C24 16 18 21 11 22 C7 22.5 4.5 20 5 18 C5.5 17 4 17 3 16 Z" fill="url(#pg)"/><circle cx="6.5" cy="13.5" r="1.8" fill="#e04848"/><circle cx="10.5" cy="10" r="1.8" fill="#58c048"/><circle cx="15" cy="8" r="1.9" fill="#f0b030"/><circle cx="12" cy="15.5" r="1.3" fill="#101010"/><line x1="13.5" y1="24.5" x2="23" y2="6" stroke="#e88a20" stroke-width="2"/><path d="M22 7.5 L24 2 L27 1.5 L25.5 6 Z" fill="#e0b878"/></svg>
<div class="r" style="left:693px;top:766px;width:40px;height:2px;background:#76b9ed"></div>
<div class="r" style="left:742px;top:766px;width:40px;height:2px;background:#76b9ed"></div>
<div class="r" style="left:787px;top:766px;width:48px;height:2px;background:#76b9ed"></div>
<div class="r" style="left:840px;top:766px;width:40px;height:2px;background:#76b9ed"></div>
<svg style="left:1114px;top:738px" width="100" height="20" viewBox="0 0 100 20"><path d="M3 12 L9 6.5 L15 12" fill="none" stroke="#fff" stroke-width="1.2"/><rect x="28.5" y="5.5" width="8" height="8" rx="2" fill="none" stroke="#fff" stroke-width="1.1"/><path d="M36.5 8 L39 6.5 V12.5 L36.5 11" fill="none" stroke="#fff" stroke-width="1.1"/><path d="M29.5 3 Q33 1.7 36.5 3 M29.5 17 Q33 18.3 36.5 17" fill="none" stroke="#bbb" stroke-width="1"/><rect x="52.5" y="4.5" width="13" height="9" fill="none" stroke="#fff" stroke-width="1.1"/><path d="M59 13.5 V16.5 M55 16.5 H63" stroke="#fff" stroke-width="1.1"/><rect x="49.5" y="4" width="5" height="4" fill="#101010" stroke="#fff" stroke-width="1"/><path d="M52 8 V17" stroke="#fff" stroke-width="1"/><path d="M74 7.5 H77 L80.5 4 V15 L77 11.5 H74 Z" fill="none" stroke="#fff" stroke-width="1.1"/><path d="M83 7.5 Q84.5 9.5 83 11.5 M85.5 5.5 Q88 9.5 85.5 13.5 M88 3.5 Q91.5 9.5 88 15.5" fill="none" stroke="#bbb" stroke-width="1.1"/></svg>
<div class="t" style="left:1215px;top:742.27px;font-size:11.5px;line-height:11.5px;letter-spacing:-0.9px;color:#fff;">ESP</div>
<div class="t" style="left:1262px;top:732.84px;font-size:12px;line-height:12px;letter-spacing:-0.45px;color:#fff;"><span style="letter-spacing:-0.45px">10</span>:<span style="letter-spacing:-0.45px">19</span></div>
<div class="t" style="left:1252px;top:750.84px;font-size:12px;line-height:12px;letter-spacing:-0.1px;color:#fff;"><span style="letter-spacing:-0.1px">9</span>/<span style="letter-spacing:-0.1px">4</span>/<span style="letter-spacing:-0.1px">2024</span></div>
<svg style="left:1317px;top:738px" width="20" height="20" viewBox="0 0 20 20"><path d="M2.5 2.5 H17.5 V14.5 H12 L10 17 L8 14.5 H2.5 Z" fill="none" stroke="#fff" stroke-width="1.1"/></svg>
<div class="r" style="left:1355px;top:728px;width:1px;height:40px;background:#5a5a5a"></div>
</body></html>
